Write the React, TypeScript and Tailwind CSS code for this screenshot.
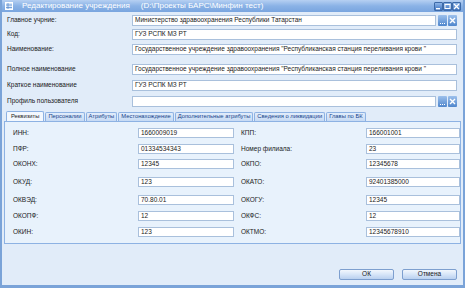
import React from "react";

type TopRow = { label: string; value: string; mt: string; triggers?: boolean };

const TOP_ROWS: TopRow[] = [
  { label: "Главное учрние:", value: "Министерство здравоохранения Республики Татарстан", mt: "mt-[3px]", triggers: true },
  { label: "Код:", value: "ГУЗ РСПК МЗ РТ", mt: "mt-[3px]" },
  { label: "Наименование:", value: "Государственное учреждение здравоохранения \"Республиканская станция переливания крови \"", mt: "mt-[4px]" },
  { label: "Полное наименование", value: "Государственное учреждение здравоохранения \"Республиканская станция переливания крови \"", mt: "mt-[9px]" },
  { label: "Краткое наименование", value: "ГУЗ РСПК МЗ РТ", mt: "mt-[5px]" },
  { label: "Профиль пользователя", value: "", mt: "mt-[5px]", triggers: true },
];

const TABS = [
  "Реквизиты",
  "Персоналии",
  "Атрибуты",
  "Местонахождение",
  "Дополнительные атрибуты",
  "Сведения о ликвидации",
  "Главы по БК",
];

type PairRow = { l: string; lv: string; r: string; rv: string; mt: string };

const PAIRS: PairRow[] = [
  { l: "ИНН:", lv: "1660009019", r: "КПП:", rv: "166001001", mt: "mt-[6px]" },
  { l: "ПФР:", lv: "01334534343", r: "Номер филиала:", rv: "23", mt: "mt-[6px]" },
  { l: "ОКОНХ:", lv: "12345", r: "ОКПО:", rv: "12345678", mt: "mt-[5px]" },
  { l: "ОКУД:", lv: "123", r: "ОКАТО:", rv: "92401385000", mt: "mt-[8px]" },
  { l: "ОКВЭД:", lv: "70.80.01", r: "ОКОГУ:", rv: "12345", mt: "mt-[8px]" },
  { l: "ОКОПФ:", lv: "12", r: "ОКФС:", rv: "12", mt: "mt-[6px]" },
  { l: "ОКИН:", lv: "123", r: "ОКТМО:", rv: "12345678910", mt: "mt-[6px]" },
];

function Field({ value, className = "" }: { value: string; className?: string }) {
  return (
    <div
      className={
        "flex items-center overflow-hidden whitespace-nowrap border border-[#a9c0dc] bg-white px-[2px] text-[#222] " +
        className
      }
    >
      {value}
    </div>
  );
}

function Triggers() {
  return (
    <div className="ml-[2px] flex h-full gap-[1px]">
      <div className="flex w-[9px] items-end justify-center rounded-[1px] bg-gradient-to-b from-[#9cc0ec] to-[#4f86cc] pb-[2px]">
        <div className="flex gap-[1px]">
          <span className="h-[1px] w-[1px] bg-white" />
          <span className="h-[1px] w-[1px] bg-white" />
          <span className="h-[1px] w-[1px] bg-white" />
        </div>
      </div>
      <div className="flex w-[9px] items-center justify-center rounded-[1px] bg-gradient-to-b from-[#9cc0ec] to-[#4f86cc]">
        <svg width="7" height="7" viewBox="0 0 7 7">
          <path d="M1 1L6 6M6 1L1 6" stroke="white" strokeWidth="1.4" />
        </svg>
      </div>
    </div>
  );
}

function TitleButton({ kind }: { kind: "min" | "max" | "close" }) {
  return (
    <div className="flex h-[9px] w-[9px] items-center justify-center rounded-[1px] border border-[#3d6aa8] bg-gradient-to-b from-[#8fb6e8] to-[#3f74c0]">
      <svg width="7" height="7" viewBox="0 0 7 7">
        {kind === "min" && <rect x="1" y="5" width="4" height="1.4" fill="white" />}
        {kind === "max" && <rect x="1" y="1.5" width="5" height="4" fill="none" stroke="white" strokeWidth="1" />}
        {kind === "close" && <path d="M1 1L6 6M6 1L1 6" stroke="white" strokeWidth="1.3" />}
      </svg>
    </div>
  );
}

export default function App() {
  return (
    <div
      className="flex h-[288px] w-[465px] flex-col overflow-hidden border-x-[2px] border-b-[3px] border-[#7aa3d8] bg-[#e1ecf9] text-[6.5px] leading-none text-[#1a1a1a]"
      style={{ fontFamily: '"Liberation Sans", Arial, sans-serif' }}
    >
      {/* title bar */}
      <div className="flex h-[12px] shrink-0 items-center bg-gradient-to-b from-[#b6d0f2] via-[#8ab2e6] to-[#79a5df] pl-[3px] pr-[2px] text-[8px] text-white">
        <svg width="8" height="8" viewBox="0 0 8 8" className="mr-[9px]">
          <rect x="0.5" y="0.5" width="7" height="7" fill="#d9e8fb" stroke="#ffffff" />
          <path d="M1 3H7M1 5.5H7M3 1V7" stroke="#5f8fcf" strokeWidth="0.8" />
        </svg>
        <span>Редактирование учреждения</span>
        <span className="ml-[11px]">(D:\Проекты БАРС\Минфин тест)</span>
        <div className="ml-auto flex">
          <TitleButton kind="min" />
          <TitleButton kind="max" />
          <TitleButton kind="close" />
        </div>
      </div>

      {/* top fields */}
      <div className="flex flex-col pl-[5px] pr-[6px]">
        {TOP_ROWS.map((r) => (
          <div key={r.label} className={"flex h-[11px] items-center " + r.mt}>
            <div className="w-[125px] shrink-0">{r.label}</div>
            <Field value={r.value} className="h-full flex-1" />
            {r.triggers && <Triggers />}
          </div>
        ))}
      </div>

      {/* tabs */}
      <div className="mt-[4px] flex h-[10px] items-end pl-[4px] text-[5.8px]">
        {TABS.map((t, i) => (
          <div
            key={t}
            className={
              i === 0
                ? "flex h-[10px] items-center rounded-t-[2px] border border-b-0 border-[#8db2e3] bg-[#f3f8fe] px-[4px]"
                : "ml-[1px] flex h-[9px] items-center rounded-t-[2px] border border-b-0 border-[#8db2e3] bg-gradient-to-b from-[#e2edfb] to-[#c6daf4] px-[2px] text-[#15428b]"
            }
          >
            {t}
          </div>
        ))}
      </div>

      {/* tab panel */}
      <div className="mx-[2px] flex h-[123px] flex-col border border-[#8db2e3] bg-[#e8f2fc] pl-[8px]">
        {PAIRS.map((p) => (
          <div key={p.l} className={"flex h-[10px] items-center " + p.mt}>
            <div className="w-[125px] shrink-0">{p.l}</div>
            <Field value={p.lv} className="h-full w-[96px]" />
            <div className="ml-[7px] w-[125px] shrink-0">{p.r}</div>
            <Field value={p.rv} className="h-full w-[94px]" />
          </div>
        ))}
      </div>

      {/* buttons */}
      <div className="mt-auto mb-[5px] flex justify-end gap-[8px] pr-[6px]">
        {["ОК", "Отмена"].map((b) => (
          <div
            key={b}
            className="flex h-[11px] w-[55px] items-center justify-center rounded-[2px] border border-[#7d9fcf] bg-gradient-to-b from-[#f2f7fd] via-[#d6e5f8] to-[#b9d0ef] text-[#1a1a1a]"
          >
            {b}
          </div>
        ))}
      </div>
    </div>
  );
}
